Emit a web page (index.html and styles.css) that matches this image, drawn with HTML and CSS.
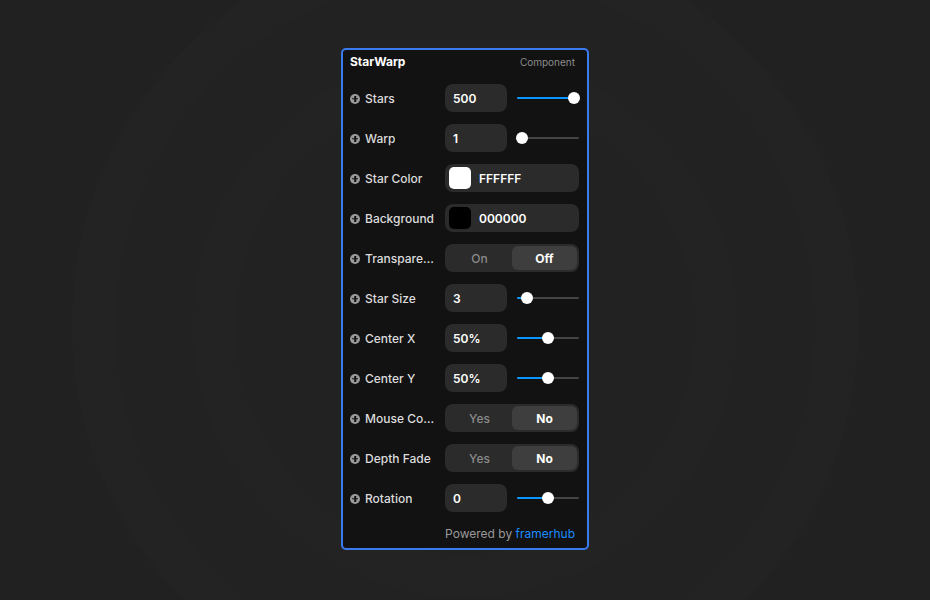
FILE: index.html
```html
<!DOCTYPE html>
<html>
<head>
<meta charset="utf-8">
<link rel="stylesheet" href="styles.css">
</head>
<body>
<div class="stage">
  <div class="panel">
    <div class="header">
      <span class="title">StarWarp</span>
      <span class="kind">Component</span>
    </div>
    <div class="rows">
      <div class="row">
        <div class="label"><span class="plus"></span><span class="ltext">Stars</span></div>
        <div class="ctrl num-slider">
          <div class="num">500</div>
          <div class="slider"><div class="fill" style="width:57px"></div><div class="thumb" style="left:57px"></div></div>
        </div>
      </div>
      <div class="row">
        <div class="label"><span class="plus"></span><span class="ltext">Warp</span></div>
        <div class="ctrl num-slider">
          <div class="num">1</div>
          <div class="slider"><div class="fill" style="width:5px"></div><div class="thumb" style="left:5px"></div></div>
        </div>
      </div>
      <div class="row">
        <div class="label"><span class="plus"></span><span class="ltext">Star Color</span></div>
        <div class="ctrl color"><span class="swatch white"></span><span class="hex">FFFFFF</span></div>
      </div>
      <div class="row">
        <div class="label"><span class="plus"></span><span class="ltext">Background</span></div>
        <div class="ctrl color"><span class="swatch black"></span><span class="hex">000000</span></div>
      </div>
      <div class="row">
        <div class="label"><span class="plus"></span><span class="ltext">Transparent Background</span></div>
        <div class="ctrl seg"><span class="opt">On</span><span class="opt active">Off</span></div>
      </div>
      <div class="row">
        <div class="label"><span class="plus"></span><span class="ltext">Star Size</span></div>
        <div class="ctrl num-slider">
          <div class="num">3</div>
          <div class="slider"><div class="fill" style="width:10px"></div><div class="thumb" style="left:10px"></div></div>
        </div>
      </div>
      <div class="row">
        <div class="label"><span class="plus"></span><span class="ltext">Center X</span></div>
        <div class="ctrl num-slider">
          <div class="num">50%</div>
          <div class="slider"><div class="fill" style="width:31px"></div><div class="thumb" style="left:31px"></div></div>
        </div>
      </div>
      <div class="row">
        <div class="label"><span class="plus"></span><span class="ltext">Center Y</span></div>
        <div class="ctrl num-slider">
          <div class="num">50%</div>
          <div class="slider"><div class="fill" style="width:31px"></div><div class="thumb" style="left:31px"></div></div>
        </div>
      </div>
      <div class="row">
        <div class="label"><span class="plus"></span><span class="ltext">Mouse Control</span></div>
        <div class="ctrl seg"><span class="opt">Yes</span><span class="opt active">No</span></div>
      </div>
      <div class="row">
        <div class="label"><span class="plus"></span><span class="ltext">Depth Fade</span></div>
        <div class="ctrl seg"><span class="opt">Yes</span><span class="opt active">No</span></div>
      </div>
      <div class="row">
        <div class="label"><span class="plus"></span><span class="ltext">Rotation</span></div>
        <div class="ctrl num-slider">
          <div class="num">0</div>
          <div class="slider"><div class="fill" style="width:31px"></div><div class="thumb" style="left:31px"></div></div>
        </div>
      </div>
    </div>
    <div class="footer">Powered by <span class="brand">framerhub</span></div>
  </div>
</div>
</body>
</html>
```

FILE: styles.css
```css
* { box-sizing: border-box; }
html, body { margin: 0; padding: 0; }
body {
  width: 930px;
  height: 600px;
  overflow: hidden;
  font-family: Inter, "Noto Sans", sans-serif;
  background: radial-gradient(circle at 465px 325px,
    #222222 0, #222222 230px,
    #232323 230px, #232323 272px,
    #222222 272px, #222222 350px,
    #232323 350px, #232323 393px,
    #212121 393px);
}
.stage {
  display: flex;
  justify-content: center;
  padding-top: 48px;
}
.panel {
  width: 248px;
  height: 502px;
  border: 2px solid #3a7bf0;
  border-radius: 5px;
  background: #121212;
  padding: 0 8px 0 7px;
  display: flex;
  flex-direction: column;
}
.header {
  height: 22px;
  display: flex;
  align-items: center;
  justify-content: space-between;
}
.title {
  color: #ffffff;
  font-size: 12px;
  font-weight: 700;
}
.kind {
  color: #8c8c8c;
  font-size: 10px;
  margin-top: 2px;
  margin-right: 4px;
}
.rows {
  margin-top: 12px;
  display: flex;
  flex-direction: column;
  gap: 12px;
}
.row {
  height: 28px;
  display: flex;
  align-items: center;
}
.label {
  width: 95px;
  display: flex;
  align-items: center;
  gap: 5px;
  padding-right: 8px;
  padding-top: 1px;
  min-width: 0;
}
.plus {
  flex: none;
  width: 10px;
  height: 10px;
  border-radius: 50%;
  background: #9a9a9a;
  position: relative;
}
.plus::before, .plus::after {
  content: "";
  position: absolute;
  background: #121212;
  left: 50%;
  top: 50%;
  transform: translate(-50%, -50%);
}
.plus::before { width: 6px; height: 1.5px; }
.plus::after { width: 1.5px; height: 6px; }
.ltext {
  color: #dcdcdc;
  font-size: 12px;
  font-weight: 500;
  white-space: nowrap;
  overflow: hidden;
  text-overflow: ellipsis;
  min-width: 0;
}
.ctrl {
  width: 134px;
  height: 28px;
}
.num-slider {
  display: flex;
  align-items: center;
  gap: 10px;
}
.num {
  width: 62px;
  height: 28px;
  background: #2b2b2b;
  border-radius: 8px;
  color: #ffffff;
  font-size: 12px;
  font-weight: 600;
  display: flex;
  align-items: center;
  padding-left: 8px;
  padding-top: 1px;
}
.slider {
  position: relative;
  width: 62px;
  height: 2px;
  background: #444444;
  border-radius: 1px;
}
.fill {
  position: absolute;
  left: 0;
  top: 0;
  height: 2px;
  background: #0a95ff;
  border-radius: 1px;
}
.thumb {
  position: absolute;
  top: 1px;
  width: 12px;
  height: 12px;
  margin-left: -6px;
  margin-top: -6px;
  border-radius: 50%;
  background: #ffffff;
}
.color {
  background: #2b2b2b;
  border-radius: 8px;
  display: flex;
  align-items: center;
  padding-left: 4px;
  gap: 8px;
}
.swatch {
  width: 22px;
  height: 22px;
  border-radius: 5px;
}
.swatch.white { background: #ffffff; }
.swatch.black { background: #000000; }
.hex {
  color: #ffffff;
  font-size: 12px;
  font-weight: 600;
  padding-top: 1px;
}
.seg {
  background: #2b2b2b;
  border-radius: 8px;
  display: flex;
  padding: 2px;
}
.opt {
  flex: 1;
  display: flex;
  align-items: center;
  justify-content: center;
  color: #8a8a8a;
  font-size: 12px;
  font-weight: 500;
  border-radius: 6px;
}
.opt.active {
  background: #3e3e3e;
  color: #ffffff;
  font-weight: 700;
}
.footer {
  margin-top: 14px;
  text-align: right;
  font-size: 12px;
  line-height: 16px;
  color: #999999;
  padding-right: 4px;
}
.brand { color: #1a8cff; }
```
